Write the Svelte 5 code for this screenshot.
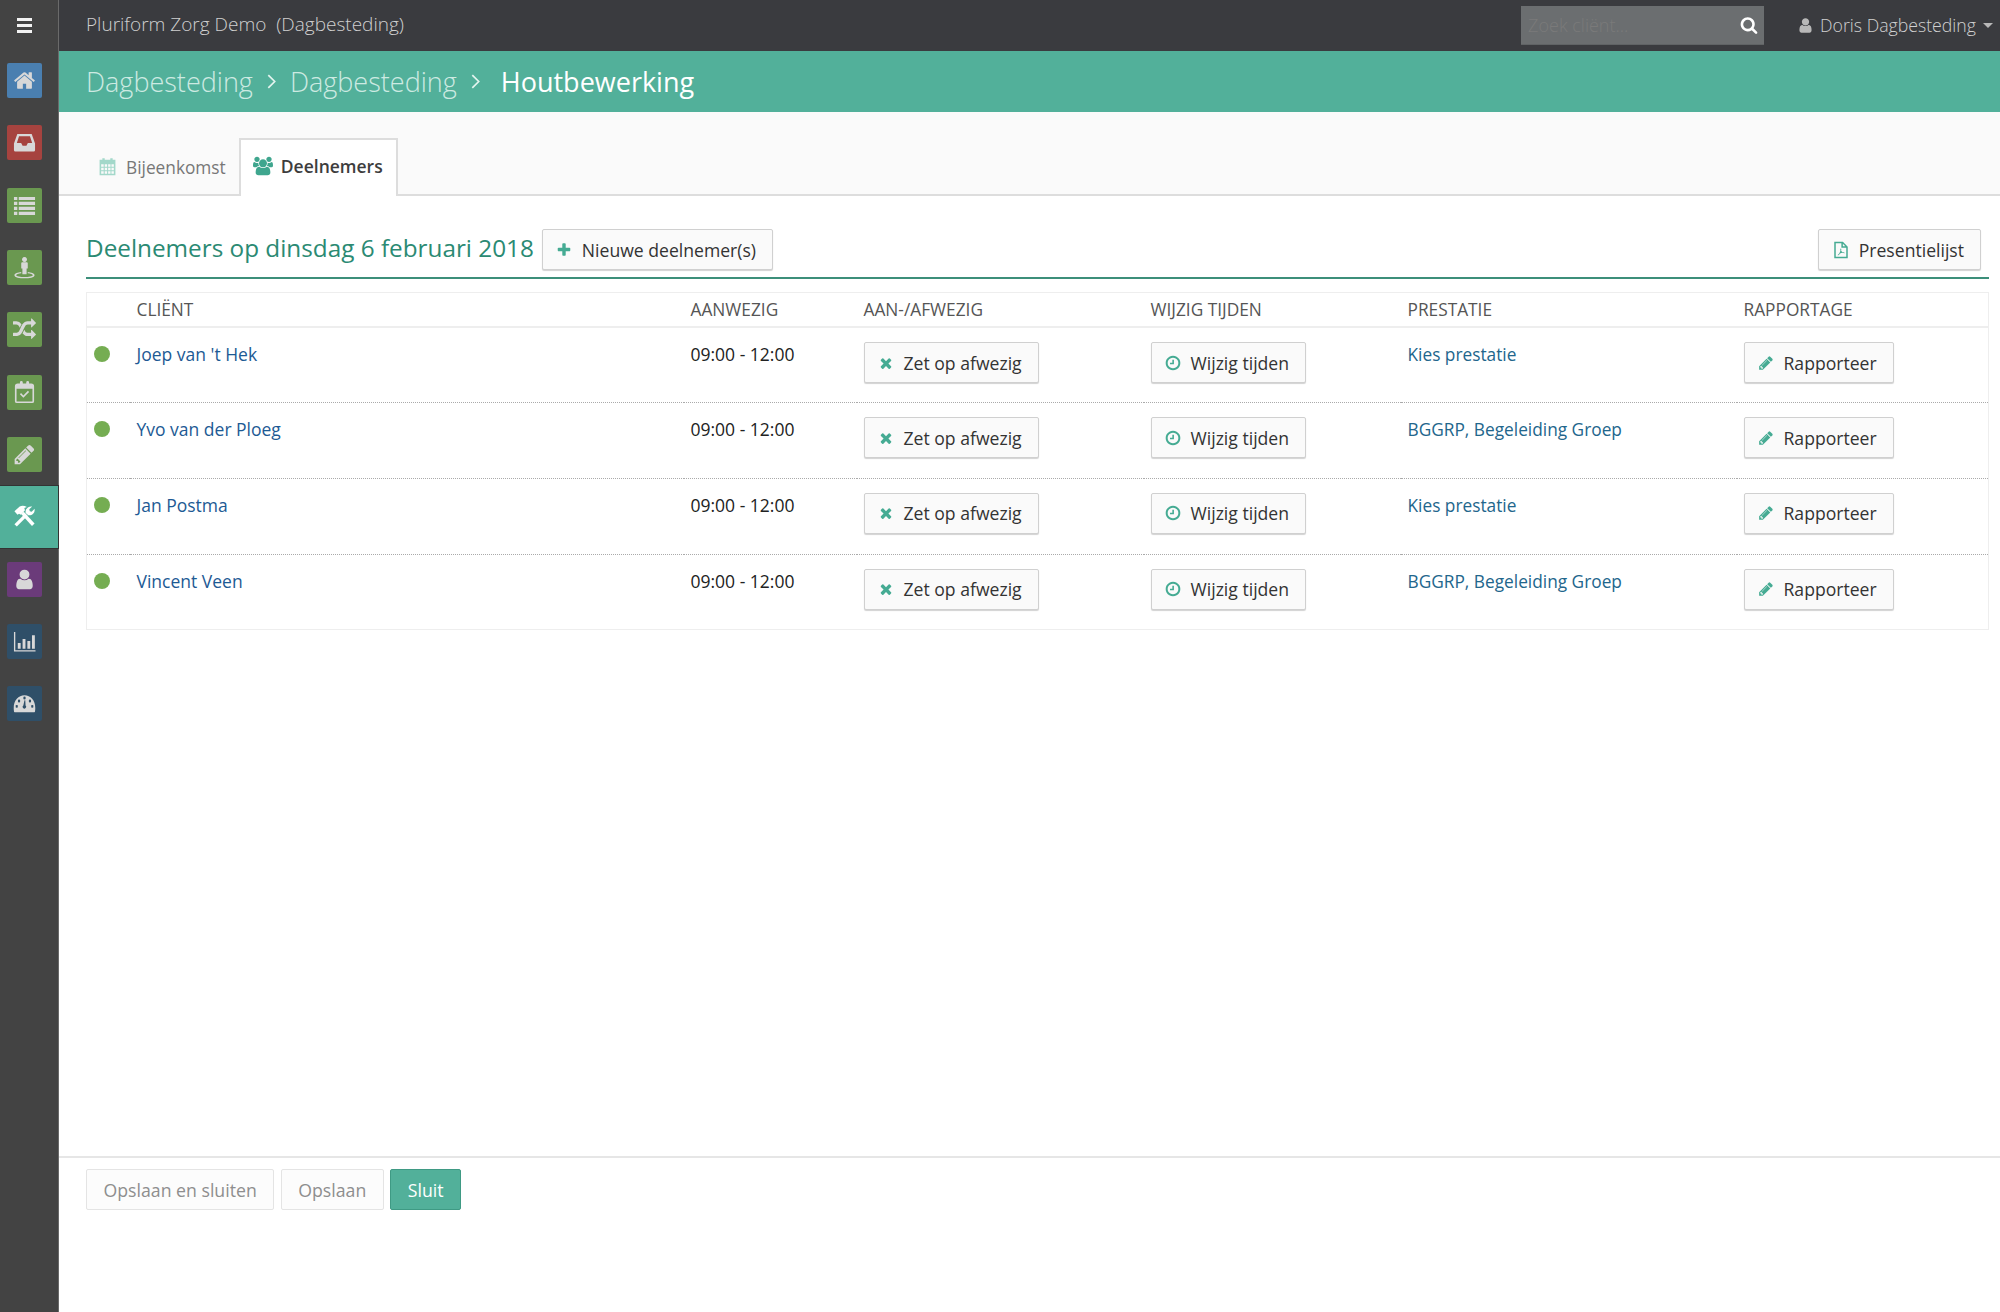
<script>
	const icons = {
		home: { vb: '0 0 1792 1792', d: ['M1472 992v480q0 26-19 45t-45 19h-384v-384h-256v384h-384q-26 0-45-19t-19-45v-480q0-1 .5-3t.5-3l575-474 575 474q1 2 1 6zm223-69l-62 74q-8 9-21 11h-3q-13 0-21-7l-692-577-692 577q-12 8-24 7-13-2-21-11l-62-74q-8-10-7-23.5t11-21.5l719-599q32-26 76-26t76 26l244 204v-195q0-14 9-23t23-9h192q14 0 23 9t9 23v408l219 182q10 8 11 21.5t-7 23.5z'] },
		user: { vb: '0 0 1792 1792', d: ['M1536 1399q0 109-62.5 187t-150.5 78h-854q-88 0-150.5-78t-62.5-187q0-85 8.5-160.5t31.5-152 58.5-131 94-89 134.5-34.5q131 128 313 128t313-128q76 0 134.5 34.5t94 89 58.5 131 31.5 152 8.5 160.5zm-256-887q0 159-112.5 271.5t-271.5 112.5-271.5-112.5-112.5-271.5 112.5-271.5 271.5-112.5 271.5 112.5 112.5 271.5z'] },
		search: { vb: '0 0 1792 1792', d: ['M1216 832q0-185-131.5-316.5t-316.5-131.5-316.5 131.5-131.5 316.5 131.5 316.5 316.5 131.5 316.5-131.5 131.5-316.5zm512 832q0 52-38 90t-90 38q-54 0-90-38l-343-342q-179 124-399 124-143 0-273.5-55.5t-225-150-150-225-55.5-273.5 55.5-273.5 150-225 225-150 273.5-55.5 273.5 55.5 225 150 150 225 55.5 273.5q0 220-124 399l343 343q37 37 37 90z'] },
		pencil: { vb: '0 0 1792 1792', d: ['M491 1536l91-91-235-235-91 91v107h128v128h107zm523-928q0-22-22-22-10 0-17 7l-542 542q-7 7-7 17 0 22 22 22 10 0 17-7l542-542q7-7 7-17zm-54-192l416 416-832 832h-416v-416zm683 96q0 53-37 90l-166 166-416-416 166-165q36-38 90-38 53 0 91 38l235 234q37 39 37 91z'] },
		plus: { vb: '0 0 1792 1792', d: ['M1600 736v192q0 40-28 68t-68 28h-416v416q0 40-28 68t-68 28h-192q-40 0-68-28t-28-68v-416h-416q-40 0-68-28t-28-68v-192q0-40 28-68t68-28h416v-416q0-40 28-68t68-28h192q40 0 68 28t28 68v416h416q40 0 68 28t28 68z'] },
		times: { vb: '0 0 1792 1792', d: ['M1490 1322q0 40-28 68l-136 136q-28 28-68 28t-68-28l-294-294-294 294q-28 28-68 28t-68-28l-136-136q-28-28-28-68t28-68l294-294-294-294q-28-28-28-68t28-68l136-136q28-28 68-28t68 28l294 294 294-294q28-28 68-28t68 28l136 136q28 28 28 68t-28 68l-294 294 294 294q28 28 28 68z'] },
		users: { vb: '0 0 1920 1792', d: ['M593 896q-162 5-265 128h-134q-82 0-138-40.5t-56-118.5q0-353 124-353 6 0 43.5 21t97.5 42.5 119 21.5q67 0 133-23-5 37-5 66 0 139 81 256zm1071 637q0 120-73 189.5t-194 69.5h-874q-121 0-194-69.5t-73-189.5q0-53 3.5-103.5t14-109 26.5-108.5 43-97.5 62-81 85.5-53.5 111.5-20q10 0 43 21.5t73 48 107 48 135 21.5 135-21.5 107-48 73-48 43-21.5q61 0 111.5 20t85.5 53.5 62 81 43 97.5 26.5 108.5 14 109 3.5 103.5zm-1024-1277q0 106-75 181t-181 75-181-75-75-181 75-181 181-75 181 75 75 181zm704 384q0 159-112.5 271.5t-271.5 112.5-271.5-112.5-112.5-271.5 112.5-271.5 271.5-112.5 271.5 112.5 112.5 271.5zm576 225q0 78-56 118.5t-138 40.5h-134q-103-123-265-128 81-117 81-256 0-29-5-66 66 23 133 23 59 0 119-21.5t97.5-42.5 43.5-21q124 0 124 353zm-128-609q0 106-75 181t-181 75-181-75-75-181 75-181 181-75 181 75 75 181z'] },
		random: { vb: '0 0 1792 1792', d: ['M666 481q-60 92-137 273-22-45-37-72.5t-40.5-63.5-51-56.5-63-35-81.5-14.5h-224q-14 0-23-9t-9-23v-192q0-14 9-23t23-9h224q250 0 410 225zm1126 799q0 14-9 23l-320 320q-9 9-23 9-13 0-22.5-9.5t-9.5-22.5v-192q-32 0-85 .5t-81 1-73-1-71-5-64-10.5-63-18.5-58-28.5-59-40-55-53.5-56-69.5q59-93 136-273 22 45 37 72.5t40.5 63.5 51 56.5 63 35 81.5 14.5h256v-192q0-14 9-23t23-9q12 0 24 10l319 319q9 9 9 23zm0-896q0 14-9 23l-320 320q-9 9-23 9-13 0-22.5-9.5t-9.5-22.5v-192h-256q-48 0-87 15t-69 45-51 61.5-45 77.5q-32 62-78 171-29 66-49.5 111t-54 105-64 100-74 83-90 68.5-106.5 42-128 16.5h-224q-14 0-23-9t-9-23v-192q0-14 9-23t23-9h224q48 0 87-15t69-45 51-61.5 45-77.5q32-62 78-171 29-66 49.5-111t54-105 64-100 74-83 90-68.5 106.5-42 128-16.5h256v-192q0-14 9-23t23-9q12 0 24 10l319 319q9 9 9 23z'] },
		inbox: { vb: '0 0 24 24', d: ['M4.500 3h15L23 13v7a1.500 1.500 0 0 1-1.500 1.500h-19A1.500 1.500 0 0 1 1 20v-7zM6.300 5.500 4 12.500h4.500l1.500 2.800h4l1.500-2.800H20l-2.300-7z'] },
		list: { vb: '0 0 24 24', d: ['M1 3h3.500v3.200H1zM6 3h17v3.200H6zM1 8.200h3.500v3.200H1zM6 8.200h17v3.200H6zM1 13.400h3.500v3.200H1zM6 13.400h17v3.200H6zM1 18.600h3.500v3.200H1zM6 18.600h17v3.200H6z'] },
		street: { vb: '0 0 24 24', d: ['M12 1a2.600 2.600 0 1 0 .01 0z', 'M9.600 6.500h4.800a1 1 0 0 1 1 1V13h-1.200v6h-4.400v-6H8.600V7.500a1 1 0 0 1 1-1z', 'M8.600 16.700C5 17.200 1.500 18 1.500 20c0 2.400 5.500 3.300 10.500 3.300S22.500 22.400 22.500 20c0-2-3.500-2.800-7.100-3.300v1.300c2.800.4 5.200 1 5.200 2 0 1.200-4.500 1.900-8.600 1.900S3.400 21.200 3.400 20c0-1 2.400-1.600 5.200-2z'] },
		calcheck: { vb: '0 0 24 24', d: ['M5 2.500h2.200V1.500a1.500 1.500 0 0 1 3 0v1h3.600v-1a1.500 1.500 0 0 1 3 0v1H19a3 3 0 0 1 3 3V21a2 2 0 0 1-2 2H4a2 2 0 0 1-2-2V5.500a3 3 0 0 1 3-3zM3.700 8.200V21a.5.5 0 0 0 .5.5h15.600a.5.5 0 0 0 .5-.5V8.200z', 'M7.200 13.800 8.400 12.600 10.800 15l4.800-4.800 1.200 1.200-6 6z'] },
		tools: { vb: '0 0 24 24', d: ['M8.500 9.500 11.200 7 22.500 19.400 19.800 22z', 'M1.500 6.500 7 1.500c2.500-1.200 5-.9 7.500.7L11.800 3l.7 2.500L8.300 10.200 6.300 9 4.700 10.300z', 'M1.500 20 12.700 8.800l2.500 2.500L4 22.500z', 'M13.200 8.300C12.500 4.500 15.500 1 20 1.500l-3 3 .5 2 2 .5 3-3c.8 4.200-2.800 7.500-6.500 6.700z'] },
		chart: { vb: '0 0 24 24', d: ['M1 2h1.400v19H23.500v1.500H1z', 'M5 13.500h3V19.500H5zM10 9.500h3V19.500h-3zM15 11.500h3V19.500h-3zM19.800 5.500h3V19.500h-3z'] },
		gauge: { vb: '0 0 24 24', d: ['M1 20C-.5 10 5 3.500 12 3.500S24.500 10 23 20c0 .7-.5 1-1 1H2c-.5 0-1-.3-1-1zM11 6.200a1.100 1.100 0 1 0 2 0 1.100 1.100 0 1 0-2 0zM5.300 9.500a1.100 1.100 0 1 0 2 0 1.100 1.100 0 1 0-2 0zM16.700 9.500a1.100 1.100 0 1 0 2 0 1.100 1.100 0 1 0-2 0zM2.900 15a1.100 1.100 0 1 0 2 0 1.100 1.100 0 1 0-2 0zM19.100 15a1.100 1.100 0 1 0 2 0 1.100 1.100 0 1 0-2 0zM12 8.500l-1.200 5.600a1.800 1.800 0 1 0 2.300 .1L12.800 8.500z'] },
		clock: { vb: '0 0 24 24', d: ['M12 1a11 11 0 1 0 .01 0zM12 4a8 8 0 1 1-.01 0z', 'M11 7h2.400v6.800H7.500v-2.300H11z'] },
		pdf: { vb: '0 0 24 24', d: ['M3 1h11.500L21 7.500V23H3zM5 3v18h14V9h-6.500V3zM14.500 3.800V7h3.200z', 'M7.500 18.500c1.800-1 3-3.200 3.800-6-.4-1.300-.3-2.500.5-2.500s.8 1.300.3 2.700c.7 1.300 1.500 2 2.500 2.300 1.200 0 2.400.2 2.300 1-.2.700-1.500.5-2.800-.2-1.300.2-2.600.6-3.800 1.100-1 1.800-2.400 3-2.800 1.600z'] },
		calendar: { vb: '0 0 24 24', d: ['M2 3.500h3.500V1.500h3v2h7V1.500h3v2H22V23H2zM4 9v3.200h3.200V9zM8.500 9v3.200h3V9zM12.800 9v3.200h3V9zM17 9v3.200h3V9zM4 13.500v3.200h3.200v-3.200zM8.500 13.500v3.200h3v-3.200zM12.800 13.500v3.200h3v-3.200zM17 13.500v3.200h3v-3.200zM4 18v3h3.200v-3zM8.500 18v3h3v-3zM12.800 18v3h3v-3zM17 18v3h3v-3z'] }
	};

	const nav = [
		{ icon: 'home', tone: 'blue' },
		{ icon: 'inbox', tone: 'red' },
		{ icon: 'list', tone: 'green' },
		{ icon: 'street', tone: 'green' },
		{ icon: 'random', tone: 'green' },
		{ icon: 'calcheck', tone: 'green' },
		{ icon: 'pencil', tone: 'green' },
		{ icon: 'tools', tone: 'active' },
		{ icon: 'user', tone: 'purple' },
		{ icon: 'chart', tone: 'navy' },
		{ icon: 'gauge', tone: 'navy' }
	];

	const rows = [
		{ name: "Joep van 't Hek", prestatie: 'Kies prestatie' },
		{ name: 'Yvo van der Ploeg', prestatie: 'BGGRP, Begeleiding Groep' },
		{ name: 'Jan Postma', prestatie: 'Kies prestatie' },
		{ name: 'Vincent Veen', prestatie: 'BGGRP, Begeleiding Groep' }
	];
</script>

{#snippet icon(name, cls = '')}
	<svg class="icon {cls}" viewBox={icons[name].vb} aria-hidden="true">
		{#each icons[name].d as d}
			<path {d} fill-rule="evenodd" />
		{/each}
	</svg>
{/snippet}

<div class="page">
	<aside class="sidebar">
		<div class="burger"><span></span><span></span><span></span></div>
		<nav class="nav">
			{#each nav as item}
				<div class="nav-item" class:current={item.tone === 'active'}>
					<div class="nav-box {item.tone}">{@render icon(item.icon)}</div>
				</div>
			{/each}
		</nav>
	</aside>

	<div class="main">
		<header class="topbar">
			<div class="brand">Pluriform Zorg Demo&nbsp; (Dagbesteding)</div>
			<div class="search">
				<span class="placeholder">Zoek cliënt...</span>
				{@render icon('search', 'search-icon')}
			</div>
			<div class="account">
				{@render icon('user', 'user-icon')}
				<span>Doris Dagbesteding</span>
				<i class="caret"></i>
			</div>
		</header>

		<div class="crumbs">
			<span>Dagbesteding</span>
			<svg class="chev" viewBox="0 0 10 16"><path d="M2 2l6 6-6 6" /></svg>
			<span>Dagbesteding</span>
			<svg class="chev" viewBox="0 0 10 16"><path d="M2 2l6 6-6 6" /></svg>
			<span class="here">Houtbewerking</span>
		</div>

		<div class="tabs">
			<div class="tab">{@render icon('calendar', 'tab-cal')} <span class="tab-label">Bijeenkomst</span></div>
			<div class="tab selected">{@render icon('users', 'tab-users')} Deelnemers</div>
		</div>

		<section class="content">
			<div class="title-row">
				<h2>Deelnemers op dinsdag 6 februari 2018</h2>
				<button class="btn">{@render icon('plus', 'btn-icon')} Nieuwe deelnemer(s)</button>
				<button class="btn push">{@render icon('pdf', 'btn-icon large')} Presentielijst</button>
			</div>

			<table>
				<colgroup>
					<col class="c-dot" /><col class="c-name" /><col class="c-time" /><col class="c-abs" />
					<col class="c-edit" /><col class="c-pres" /><col />
				</colgroup>
				<thead>
					<tr>
						<th></th>
						<th>CLIËNT</th>
						<th>AANWEZIG</th>
						<th>AAN-/AFWEZIG</th>
						<th>WIJZIG TIJDEN</th>
						<th>PRESTATIE</th>
						<th>RAPPORTAGE</th>
					</tr>
				</thead>
				<tbody>
					{#each rows as row}
						<tr>
							<td><span class="dot"></span></td>
							<td class="text"><span class="client">{row.name}</span></td>
							<td class="text">09:00 - 12:00</td>
							<td><button class="btn">{@render icon('times', 'btn-icon')} Zet op afwezig</button></td>
							<td><button class="btn">{@render icon('clock', 'btn-icon')} Wijzig tijden</button></td>
							<td class="text"><span class="pres">{row.prestatie}</span></td>
							<td><button class="btn">{@render icon('pencil', 'btn-icon')} Rapporteer</button></td>
						</tr>
					{/each}
				</tbody>
			</table>
		</section>

		<footer class="footer">
			<button class="ghost">Opslaan en sluiten</button>
			<button class="ghost">Opslaan</button>
			<button class="primary">Sluit</button>
		</footer>
	</div>
</div>

<style>
	:global(body) {
		margin: 0;
		background: #fff;
		font-family: 'Open Sans', 'Liberation Sans', sans-serif;
	}
	.page {
		display: grid;
		grid-template-columns: 59px 1fr;
		height: 1312px;
		overflow: hidden;
	}
	.icon {
		display: block;
		fill: currentColor;
	}

	.sidebar {
		background: #434343;
		border-right: 1px solid #6a6a6a;
		box-sizing: border-box;
	}
	.burger {
		height: 49.5px;
		box-sizing: border-box;
		padding-top: 18px;
		display: flex;
		flex-direction: column;
		align-items: center;
		gap: 3px;
		padding-right: 9px;
	}
	.burger span {
		width: 15px;
		height: 3px;
		background: #f2f2f2;
	}
	.nav-item {
		height: 62.3px;
		display: flex;
		align-items: center;
		box-sizing: border-box;
		padding-left: 7px;
	}
	.nav-item.current {
		background: #52b09a;
		box-shadow: 0 0 0 1px #333;
		width: 58px;
	}
	.nav-box {
		width: 35px;
		height: 35px;
		border-radius: 2px;
		color: #d8d8d8;
		display: flex;
		align-items: center;
		justify-content: center;
	}
	.nav-box .icon {
		width: 23px;
		height: 23px;
	}
	.blue {
		background: #4a7fb0;
	}
	.red {
		background: #a6433f;
	}
	.green {
		background: #6a9850;
	}
	.purple {
		background: #6b3b7a;
	}
	.navy {
		background: #2f4f68;
	}
	.nav-box.active {
		color: #fff;
	}

	.main {
		display: flex;
		flex-direction: column;
		min-width: 0;
	}
	.topbar {
		height: 51px;
		flex: none;
		background: #3a3b3f;
		display: flex;
		align-items: center;
		color: #c4c4c4;
		font-size: 17.7px;
		padding-left: 27px;
	}
	.brand {
		font-size: 19px;
		font-weight: 300;
		color: #d0d0d0;
		margin-bottom: 3px;
	}
	.search {
		margin-left: auto;
		width: 243px;
		height: 39px;
		box-sizing: border-box;
		background: #6b6e70;
		border-bottom: 1px solid #606365;
		display: flex;
		align-items: center;
		justify-content: space-between;
		padding: 0 6px 0 7px;
		color: #fff;
		margin-top: -1px;
	}
	.placeholder {
		color: #7a7a7a;
		font-size: 18px;
		font-weight: 300;
	}
	.search :global(.search-icon) {
		width: 18px;
		height: 18px;
	}
	.account {
		display: flex;
		align-items: center;
		margin-left: 33px;
		margin-right: 7px;
		font-weight: 300;
		color: #d0d0d0;
		margin-bottom: 1px;
	}
	.account :global(.user-icon) {
		width: 17px;
		height: 17px;
		margin-right: 6px;
		color: #b8b8b8;
	}
	.caret {
		width: 0;
		height: 0;
		margin-left: 7px;
		border-left: 5px solid transparent;
		border-right: 5px solid transparent;
		border-top: 5px solid #b8b8b8;
	}

	.crumbs {
		height: 61px;
		flex: none;
		background: #52b09a;
		display: flex;
		align-items: center;
		gap: 13px;
		padding-left: 27px;
		font-size: 27px;
		font-weight: 300;
		color: #cdeae2;
		box-sizing: border-box;
	}
	.crumbs .here {
		color: #fff;
		font-weight: 400;
		margin-left: 7px;
	}
	.chev {
		width: 11px;
		height: 17px;
		fill: none;
		stroke: #e4f4ef;
		stroke-width: 1.6;
	}

	.tabs {
		height: 84px;
		flex: none;
		box-sizing: border-box;
		background: #fafafa;
		border-bottom: 2px solid #ddd;
		display: flex;
		align-items: flex-end;
		padding-left: 26px;
		font-size: 17.3px;
	}
	.tab {
		display: flex;
		align-items: center;
		gap: 9px;
		height: 56px;
		box-sizing: border-box;
		padding: 0 13px;
		color: #777;
	}
	.tab-label {
		margin-top: 2px;
	}
	.tab.selected {
		background: #fff;
		border: 2px solid #ddd;
		border-bottom: none;
		margin-bottom: -2px;
		height: 58px;
		width: 159px;
		color: #3d3d3d;
		font-weight: 600;
		padding: 0 12px 5px;
		gap: 8px;
		font-size: 17.5px;
	}
	.tab :global(.tab-cal) {
		width: 19px;
		height: 19px;
		color: #a3d8ca;
		margin-top: 1px;
	}
	.tab :global(.tab-users) {
		width: 20px;
		height: 20px;
		color: #3fa68e;
	}

	.content {
		flex: 1;
		padding: 0 11px 0 27px;
	}
	.title-row {
		display: flex;
		align-items: center;
		gap: 8px;
		height: 83px;
		box-sizing: border-box;
		padding: 33px 8px 7px 0;
		border-bottom: 2px solid #3c8f7a;
	}
	h2 {
		margin: 0 0 4px;
		font-size: 24.3px;
		font-weight: 400;
		color: #2b8a73;
	}
	.push {
		margin-left: auto;
	}
	.btn {
		display: inline-flex;
		align-items: center;
		gap: 10px;
		height: 41px;
		box-sizing: border-box;
		padding: 0 16px 0 13px;
		background: #fafafa;
		border: 1px solid #d0d0d0;
		border-radius: 2px;
		box-shadow: 0 1px 1px rgba(0, 0, 0, 0.18);
		color: #333;
		font: 400 17.6px 'Open Sans', sans-serif;
	}
	.btn :global(.btn-icon) {
		width: 16px;
		height: 16px;
		color: #45ab93;
	}
	.btn :global(.btn-icon.large) {
		width: 18px;
		height: 18px;
		margin-left: 0;
		margin-right: -1px;
	}

	table {
		width: 100%;
		margin-top: 13px;
		border-collapse: collapse;
		table-layout: fixed;
		border: 1px solid #eee;
		font-size: 17.5px;
	}
	.c-dot {
		width: 43px;
	}
	.c-name {
		width: 554px;
	}
	.c-time {
		width: 173px;
	}
	.c-abs {
		width: 287px;
	}
	.c-edit {
		width: 257px;
	}
	.c-pres {
		width: 336px;
	}
	th {
		height: 33px;
		padding: 0 7px;
		text-align: left;
		font-size: 17.3px;
		font-weight: 400;
		color: #555;
		border-bottom: 2px solid #eee;
	}
	td {
		height: 75.7px;
		padding: 14px 7px 0;
		vertical-align: top;
		box-sizing: border-box;
		color: #222;
		border-bottom: 1px dotted #aaa;
	}
	tbody tr:last-child td {
		border-bottom: none;
	}
	td.text {
		padding-top: 13px;
		line-height: 27px;
	}
	.dot {
		display: block;
		width: 16px;
		height: 16px;
		margin: 4px 0 0;
		border-radius: 50%;
		background: #75ad52;
	}
	.client {
		color: #1d5a94;
	}
	.pres {
		color: #22668c;
		font-size: 17.3px;
	}

	.footer {
		height: 156px;
		flex: none;
		box-sizing: border-box;
		border-top: 2px solid #e6e6e6;
		padding: 11px 0 0 27px;
		display: flex;
		align-items: flex-start;
		gap: 6.5px;
	}
	.ghost,
	.primary {
		height: 41px;
		box-sizing: border-box;
		padding: 0 16.5px;
		border-radius: 2px;
		font: 400 17.7px 'Open Sans', sans-serif;
	}
	.ghost {
		background: #fcfcfc;
		border: 1px solid #e4e4e4;
		color: #8e8e8e;
	}
	.primary {
		background: #52b09a;
		border: 1px solid #3f9a84;
		color: #fff;
	}
</style>
